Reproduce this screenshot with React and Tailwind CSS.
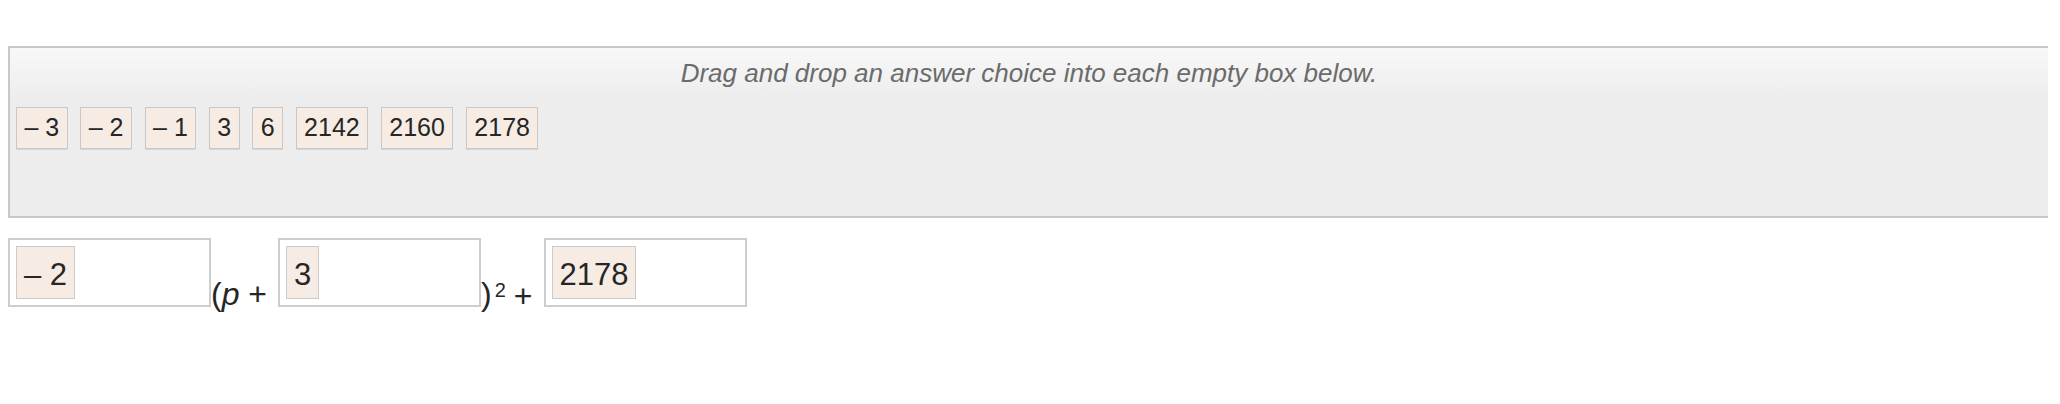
import React from "react";

const choices = ["\u2013 3", "\u2013 2", "\u2013 1", "3", "6", "2142", "2160", "2178"];

function Chip({ children }) {
  return (
    <div className="border border-[#c8c8c8] bg-[#f6ece3] px-[7.5px] pt-[5px] pb-[6px] text-[25px] leading-[29px] text-[#262626] shadow-[0_1px_0_#d6d6d6]">
      {children}
    </div>
  );
}

function BigChip({ children }) {
  return (
    <div className="inline-block border border-[#cbcbcb] bg-[#f6ece3] px-[7px] pt-[10px] pb-[6px] text-[31px] leading-[35px] text-[#262626]">
      {children}
    </div>
  );
}

function DropBox({ children, className = "" }) {
  return (
    <div className={"h-[69px] w-[203px] shrink-0 border-2 border-[#cdcdcd] bg-white p-[6px] " + className}>
      {children}
    </div>
  );
}

export default function App() {
  return (
    <div className="h-[404px] w-[2060px] bg-white font-['Liberation_Sans',Arial,sans-serif] text-[#262626]">
      <div className="h-[46px]" />
      <div className="ml-2 flex h-[172px] w-[2040px] flex-col border-y-2 border-l-2 border-[#c8c8c8] bg-linear-to-b from-[#f8f8f8] to-[#ededed] to-30%">
        <div className="mt-[10px] h-[30px] text-center text-[26px] italic leading-[30px] text-[#6b6b6b]">
          Drag and drop an answer choice into each empty box below.
        </div>
        <div className="mt-[19px] flex items-start gap-[12.5px] pl-[6px]">
          {choices.map((c) => (
            <Chip key={c}>{c}</Chip>
          ))}
        </div>
      </div>
      <div className="ml-2 mt-[20px] flex items-start">
        <DropBox>
          <BigChip>{"\u2013 2"}</BigChip>
        </DropBox>
        <span className="mt-[40px] whitespace-pre text-[32px] leading-[32px] text-[#262626]">
          (<span className="italic">p</span> +
        </span>
        <DropBox className="ml-[11px]">
          <BigChip>3</BigChip>
        </DropBox>
        <span className="mt-[40px] text-[32px] leading-[32px] text-[#262626]">)</span>
        <span className="ml-[3px] mt-[42px] text-[20px] leading-[20px] text-[#262626]">2</span>
        <span className="ml-[8px] mt-[42px] text-[32px] leading-[32px] text-[#262626]">+</span>
        <DropBox className="ml-[11px]">
          <BigChip>2178</BigChip>
        </DropBox>
      </div>
    </div>
  );
}
